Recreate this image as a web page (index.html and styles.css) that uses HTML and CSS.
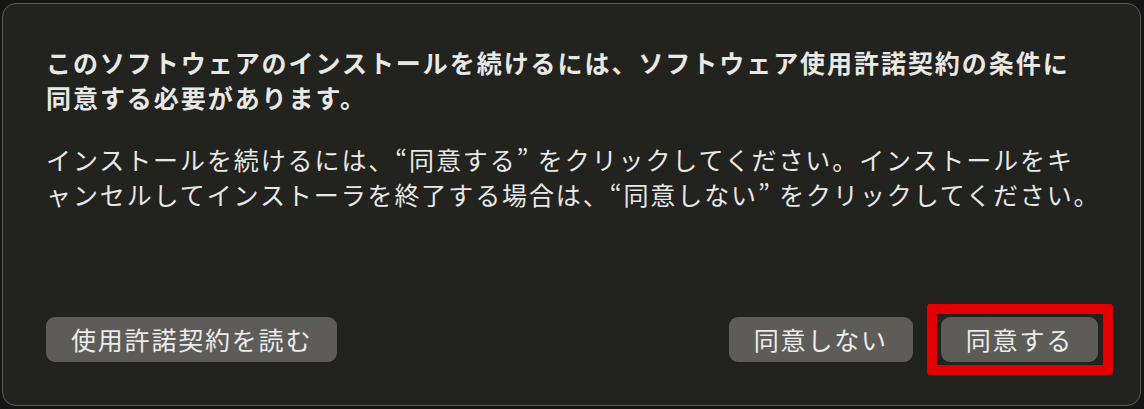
FILE: index.html
```html
<!DOCTYPE html>
<html lang="ja">
<head>
<meta charset="utf-8">
<link rel="stylesheet" href="styles.css">
</head>
<body>
<div class="dialog">
  <div class="title">このソフトウェアのインストールを続けるには、ソフトウェア使用許諾契約の条件に<br>同意する必要があります。</div>
  <div class="body">インストールを続けるには、“同意する” をクリックしてください。インストールをキ<br>ャンセルしてインストーラを終了する場合は、“同意しない” をクリックしてください。</div>
  <div class="actions">
    <button class="btn">使用許諾契約を読む</button>
    <div class="spacer"></div>
    <button class="btn">同意しない</button>
    <span class="highlight"><button class="btn">同意する</button></span>
  </div>
</div>
</body>
</html>
```
FILE: styles.css
```css
html, body {
  margin: 0;
  padding: 0;
  background: #151515;
}
body {
  width: 1144px;
  height: 409px;
  overflow: hidden;
  font-family: "Noto Sans CJK JP", "Noto Sans", sans-serif;
  color: #e8e8e6;
}
.dialog {
  box-sizing: border-box;
  margin: 3px 3px 3px 2px;
  height: 403px;
  border: 1.5px solid #5a5a58;
  border-radius: 14px;
  background: #22221f;
  padding: 41px 42px 43.5px 43px;
  display: flex;
  flex-direction: column;
}
.title {
  font-size: 25px;
  font-weight: 700;
  line-height: 35px;
  letter-spacing: 1.95px;
  white-space: nowrap;
}
.body {
  margin-top: 27px;
  font-size: 25px;
  line-height: 35px;
  letter-spacing: 1.9px;
  white-space: nowrap;
}
.actions {
  margin-top: auto;
  display: flex;
  align-items: center;
  gap: 28px;
}
.spacer {
  flex: 1;
}
.btn {
  font-family: inherit;
  font-size: 25px;
  letter-spacing: 1.8px;
  color: #ececea;
  background: #5d5c59;
  border: none;
  border-radius: 9px;
  height: 45px;
  padding: 0 25px 0 25px;
  margin: 0;
}
.highlight {
  position: relative;
  display: inline-flex;
}
.highlight::after {
  content: "";
  position: absolute;
  left: -14px;
  right: -15px;
  top: -13px;
  bottom: -13px;
  border: 10px solid #e10000;
  border-radius: 3px;
  pointer-events: none;
}
```
